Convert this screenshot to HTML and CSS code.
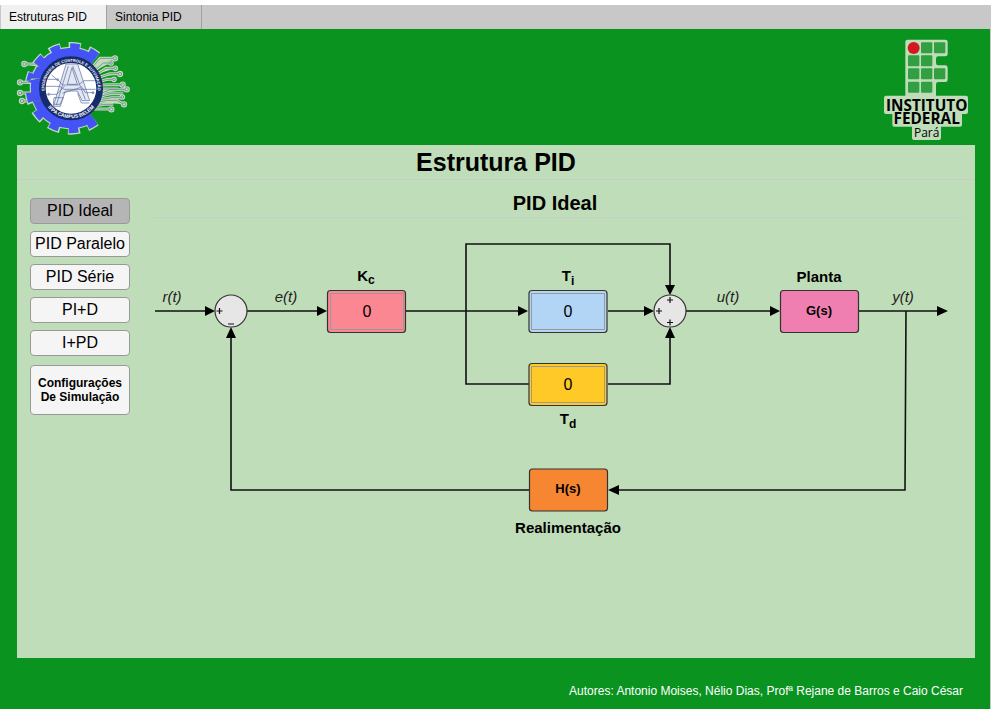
FILE: index.html
```html
<!DOCTYPE html>
<html lang="pt-BR">
<head>
<meta charset="utf-8">
<title>Estrutura PID</title>
<link rel="stylesheet" href="styles.css">
</head>
<body>
<nav class="tabs" role="tablist">
  <button class="tab tab-active" role="tab" aria-selected="true">Estruturas PID</button>
  <button class="tab" role="tab" aria-selected="false">Sintonia PID</button>
</nav>
<main class="page">
  <header class="header">
    <svg class="logo-course" viewBox="0 0 375 315" role="img" aria-label="Engenharia de Controle e Automação">
      <defs>
        <path id="arcTop" d="M105 178 A80 80 0 1 1 261 178"/>
        <path id="arcBottom" d="M106 207 A91 91 0 0 0 260 207"/>
        <g id="traces">
          <path d="M43 87H78L88 96M30 142H52L66 130H90M30 174H64M36 198H95"/>
          <path d="M240 105L270 70H315M250 110L280 84H300M260 118L288 100H316M265 128L300 116H328M270 140L290 133H312M275 150L300 149H340M275 162H325M275 174L300 164H350M272 184L300 176H340M268 194L305 188H336M262 202L290 196H320L342 208M255 212L285 208H310M248 222H304"/>
          <circle cx="43" cy="87" r="5"/><circle cx="30" cy="142" r="5"/><circle cx="30" cy="174" r="5"/><circle cx="36" cy="198" r="5"/>
          <circle cx="315" cy="70" r="5"/><circle cx="303" cy="84" r="4"/><circle cx="316" cy="100" r="4"/><circle cx="330" cy="117" r="5"/><circle cx="312" cy="133" r="4"/><circle cx="338" cy="149" r="5"/><circle cx="350" cy="163" r="5"/><circle cx="337" cy="186" r="4"/><circle cx="342" cy="208" r="5"/><circle cx="304" cy="223" r="5"/>
        </g>
      </defs>
      <g fill="none" stroke="#bfddb8" stroke-linejoin="round">
        <use href="#traces" stroke-width="9"/>
        <path stroke-width="32" d="M252 76A108 108 0 1 0 247 246"/>
        <path stroke-width="30" pathLength="256" stroke-dasharray="16 11" stroke-dashoffset="1" d="M261 64A124 124 0 1 0 257 259"/>
      </g>
      <g fill="none" stroke="#4453f5">
        <path stroke-width="27" d="M251 77A107 107 0 1 0 247 245"/>
        <path stroke-width="22" pathLength="256" stroke-dasharray="13 14" d="M261 64A124 124 0 1 0 257 259"/>
      </g>
      <use href="#traces" fill="#bfddb8" stroke="#5b7590" stroke-width="2"/>
      <circle cx="183" cy="160" r="86" fill="#fff" stroke="#152b6c" stroke-width="20"/>
      <g fill="none" stroke="#5467a0" stroke-width="2">
        <path fill="#e4e8f2" d="M130 214L168 87H203L239 197H216L202 168H166L151 214Z"/>
        <path d="M139 210L175 93M172 148L186 98L202 148ZM188 93L226 194M132 188H160L150 208H130ZM111 133H143L158 150H205L222 137H254M106 154H149L162 163H257M113 178H140L164 153M125 120L140 133M214 154L226 173H251M203 176L214 204H238M157 175L210 158"/>
        <circle cx="143" cy="134" r="3"/><circle cx="116" cy="178" r="3"/><circle cx="249" cy="173" r="3"/>
      </g>
      <g class="seal-text" text-anchor="middle">
        <text class="seal-course"><textPath href="#arcTop" startOffset="50%">ENGENHARIA DE CONTROLE E AUTOMAÇÃO</textPath></text>
        <text class="seal-campus"><textPath href="#arcBottom" startOffset="50%">IFPA CAMPUS BELÉM</textPath></text>
      </g>
    </svg>
    <svg class="logo-institute" viewBox="0 0 363 330" role="img" aria-label="Instituto Federal Pará">
      <path fill="#bfddb8" d="M113 29H226Q233 29 233 36V72Q233 79 226 79H205Q198 79 198 86V99Q198 106 205 106H226Q233 106 233 113V149Q233 156 226 156H205Q198 156 198 163V197H288Q294 197 294 203V246Q294 252 288 252H276V284Q276 290 270 290H213V324Q213 330 207 330H132Q126 330 126 324V290H73Q67 290 67 284V252H48Q42 252 42 246V203Q42 197 48 197H106V36Q106 29 113 29Z"/>
      <g fill="#319f42">
        <rect x="153" y="37" width="34" height="33" rx="3"/><rect x="192" y="37" width="34" height="33" rx="3"/>
        <rect x="114" y="76" width="34" height="33" rx="3"/><rect x="153" y="76" width="34" height="33" rx="3"/>
        <rect x="114" y="115" width="34" height="33" rx="3"/><rect x="153" y="115" width="34" height="33" rx="3"/><rect x="192" y="115" width="34" height="33" rx="3"/>
        <rect x="114" y="155" width="34" height="33" rx="3"/><rect x="153" y="155" width="34" height="33" rx="3"/>
      </g>
      <circle cx="131" cy="54" r="18" fill="#d3191f"/>
      <g class="institute-text" text-anchor="middle">
        <text class="institute-name" x="170" y="242">INSTITUTO</text>
        <text class="institute-name" x="170" y="282">FEDERAL</text>
        <text class="institute-state" x="170" y="321">Pará</text>
      </g>
    </svg>
  </header>

  <section class="panel">
    <h1 class="title">Estrutura PID</h1>
    <div class="content">
      <div class="menu">
        <button class="option option-active">PID Ideal</button>
        <button class="option">PID Paralelo</button>
        <button class="option">PID Série</button>
        <button class="option">PI+D</button>
        <button class="option">I+PD</button>
        <button class="option option-config">Configurações De Simulação</button>
      </div>
      <div class="view">
        <h2 class="subtitle">PID Ideal</h2>
        <svg class="diagram" viewBox="149 218 816 330">
          <g fill="none" stroke="#111" stroke-width="1.6">
            <path d="M155 311H206M247 311H318M406 311H520M466 311V244H670V286M466 311V384H529M608 311H645M608 384H670V336M686 311H771M859 311H938M906 311L905 490H618M529 490H231V337"/>
          </g>
          <path d="M215 311L205 306V316ZM327 311L317 306V316ZM528 311L518 306V316ZM654 311L644 306V316ZM780 311L770 306V316ZM948 311L937 306V316ZM670 295L665 285H675ZM670 327L665 338H675ZM231 327L226 338H236ZM608 490L619 485V495Z"/>
          <g stroke="#333" stroke-width="1.2">
            <circle cx="231" cy="311" r="16" fill="#e6e6e6"/><circle cx="670" cy="311" r="16" fill="#e6e6e6"/>
            <rect x="327.5" y="290.5" width="78" height="42" rx="3" fill="#fa8791"/>
            <rect x="529" y="290.5" width="78" height="42" rx="3" fill="#b2d5f6"/>
            <rect x="529" y="363.5" width="78" height="42" rx="3" fill="#ffca28"/>
            <rect x="780.5" y="290.5" width="78" height="42" rx="3" fill="#f07fb1"/>
            <rect x="529.5" y="469" width="78" height="42" rx="3" fill="#f68632"/>
          </g>
          <path fill="none" stroke="#111" stroke-width="1.2" d="M216.500 311H222.500M219.500 308V314M228 324H234M656 311H662M659 308V314M667 300H673M670 297V303M667 322.500H673M670 319.500V325.500"/>
          <g class="signal" text-anchor="middle">
            <text x="172" y="302">r(t)</text><text x="286" y="302">e(t)</text><text x="728" y="302">u(t)</text><text x="903" y="302">y(t)</text>
          </g>
          <g class="gain" text-anchor="middle">
            <text x="366" y="281">K<tspan class="sub" dy="3">c</tspan></text>
            <text x="568" y="281">T<tspan class="sub" dy="4">i</tspan></text>
            <text x="568" y="424">T<tspan class="sub" dy="4">d</tspan></text>
          </g>
          <g class="block-title" text-anchor="middle">
            <text x="819" y="282">Planta</text><text x="568" y="533">Realimentação</text>
          </g>
          <g class="block-text" text-anchor="middle">
            <text x="819" y="315">G(s)</text><text x="568" y="493">H(s)</text>
          </g>
          <foreignObject x="330" y="293" width="74" height="37"><input class="gain-input gain-kc" type="text" value="0" aria-label="Kc"></foreignObject>
          <foreignObject x="531" y="293" width="74" height="37"><input class="gain-input gain-ti" type="text" value="0" aria-label="Ti"></foreignObject>
          <foreignObject x="531" y="366" width="74" height="37"><input class="gain-input gain-td" type="text" value="0" aria-label="Td"></foreignObject>
        </svg>
      </div>
    </div>
  </section>
  <footer class="footer">Autores: Antonio Moises, Nélio Dias, Profª Rejane de Barros e Caio César</footer>
</main>
</body>
</html>
```
FILE: styles.css
```css
* { box-sizing: border-box; }

body {
  margin: 0;
  min-height: 100vh;
  display: flex;
  flex-direction: column;
  padding-top: 5px;
  background: #fff;
  color: #000;
  font-family: "Liberation Sans", Arial, sans-serif;
}

button, input { font-family: inherit; color: inherit; }

.tabs {
  display: flex;
  height: 24px;
  background: #c8c8c8;
  border-left: 1px solid #c8c8c8;
}

.tab {
  padding: 0 19px 0 8px;
  border: 0;
  border-right: 1px solid #a0a0a0;
  background: #c8c8c8;
  font-size: 12px;
}

.tab-active { background: #f0f0f0; }

.page {
  flex: 1;
  display: flex;
  flex-direction: column;
  padding: 0 15px 0 17px;
  border-right: 1px solid #c8c8c8;
  background: #0a931f;
}

.header {
  display: flex;
  justify-content: space-between;
  align-items: flex-start;
  height: 116px;
  margin: 0 -16px 0 -7px;
}

.logo-course { width: 125px; height: 105px; margin-top: 6px; }
.logo-institute { width: 121px; height: 110px; margin-top: 1px; }

.seal-text {
  fill: #fff;
  font-family: "Liberation Sans Narrow", "Liberation Sans", sans-serif;
  font-weight: bold;
}

.seal-course { font-size: 12px; }
.seal-campus { font-size: 15px; }

.institute-text { font-family: "Open Sans", "Noto Sans", sans-serif; }
.institute-name { font-size: 46px; font-weight: bold; }
.institute-state { font-size: 36px; }

.panel {
  flex: 1;
  background: #bfddb8;
}

.title {
  margin: 0;
  height: 35px;
  border-bottom: 1px solid #c5cfc5;
  font-size: 25px;
  line-height: 34px;
  text-align: center;
}

.content {
  display: grid;
  grid-template-columns: 100px 1fr;
  gap: 19px;
  padding: 0 10px 0 13px;
}

.menu {
  display: flex;
  flex-direction: column;
  gap: 7px;
  padding-top: 18px;
}

.option {
  height: 26px;
  padding: 0;
  border: 1px solid #999;
  border-radius: 4px;
  background: #f5f5f5;
  font-size: 16px;
  white-space: nowrap;
}

.option-active { background: #b5b5b5; }

.option-config {
  height: 50px;
  margin-top: 2px;
  padding: 0 4px;
  font-size: 12px;
  font-weight: bold;
  line-height: 14px;
  white-space: normal;
}

.subtitle {
  margin: 0;
  height: 38px;
  padding-right: 4px;
  border-bottom: 1px solid #c5cfc5;
  font-size: 20px;
  line-height: 46px;
  text-align: center;
}

.diagram { display: block; width: 100%; }

.signal { font-size: 15px; font-style: italic; fill: #222; }
.gain { font-size: 15px; font-weight: bold; }
.sub { font-size: 12px; }
.block-title { font-size: 15px; font-weight: bold; }
.block-text { font-size: 13px; font-weight: bold; }

.gain-input {
  display: block;
  width: 100%;
  height: 100%;
  padding: 0;
  border: 1px solid #999;
  font-size: 16px;
  text-align: center;
}

.gain-kc { background: #fa8791; }
.gain-ti { background: #b2d5f6; }
.gain-td { background: #ffca28; }

.footer {
  height: 51px;
  padding: 26px 12px 0 0;
  color: #fff;
  font-size: 12px;
  line-height: 14px;
  text-align: right;
}
```
